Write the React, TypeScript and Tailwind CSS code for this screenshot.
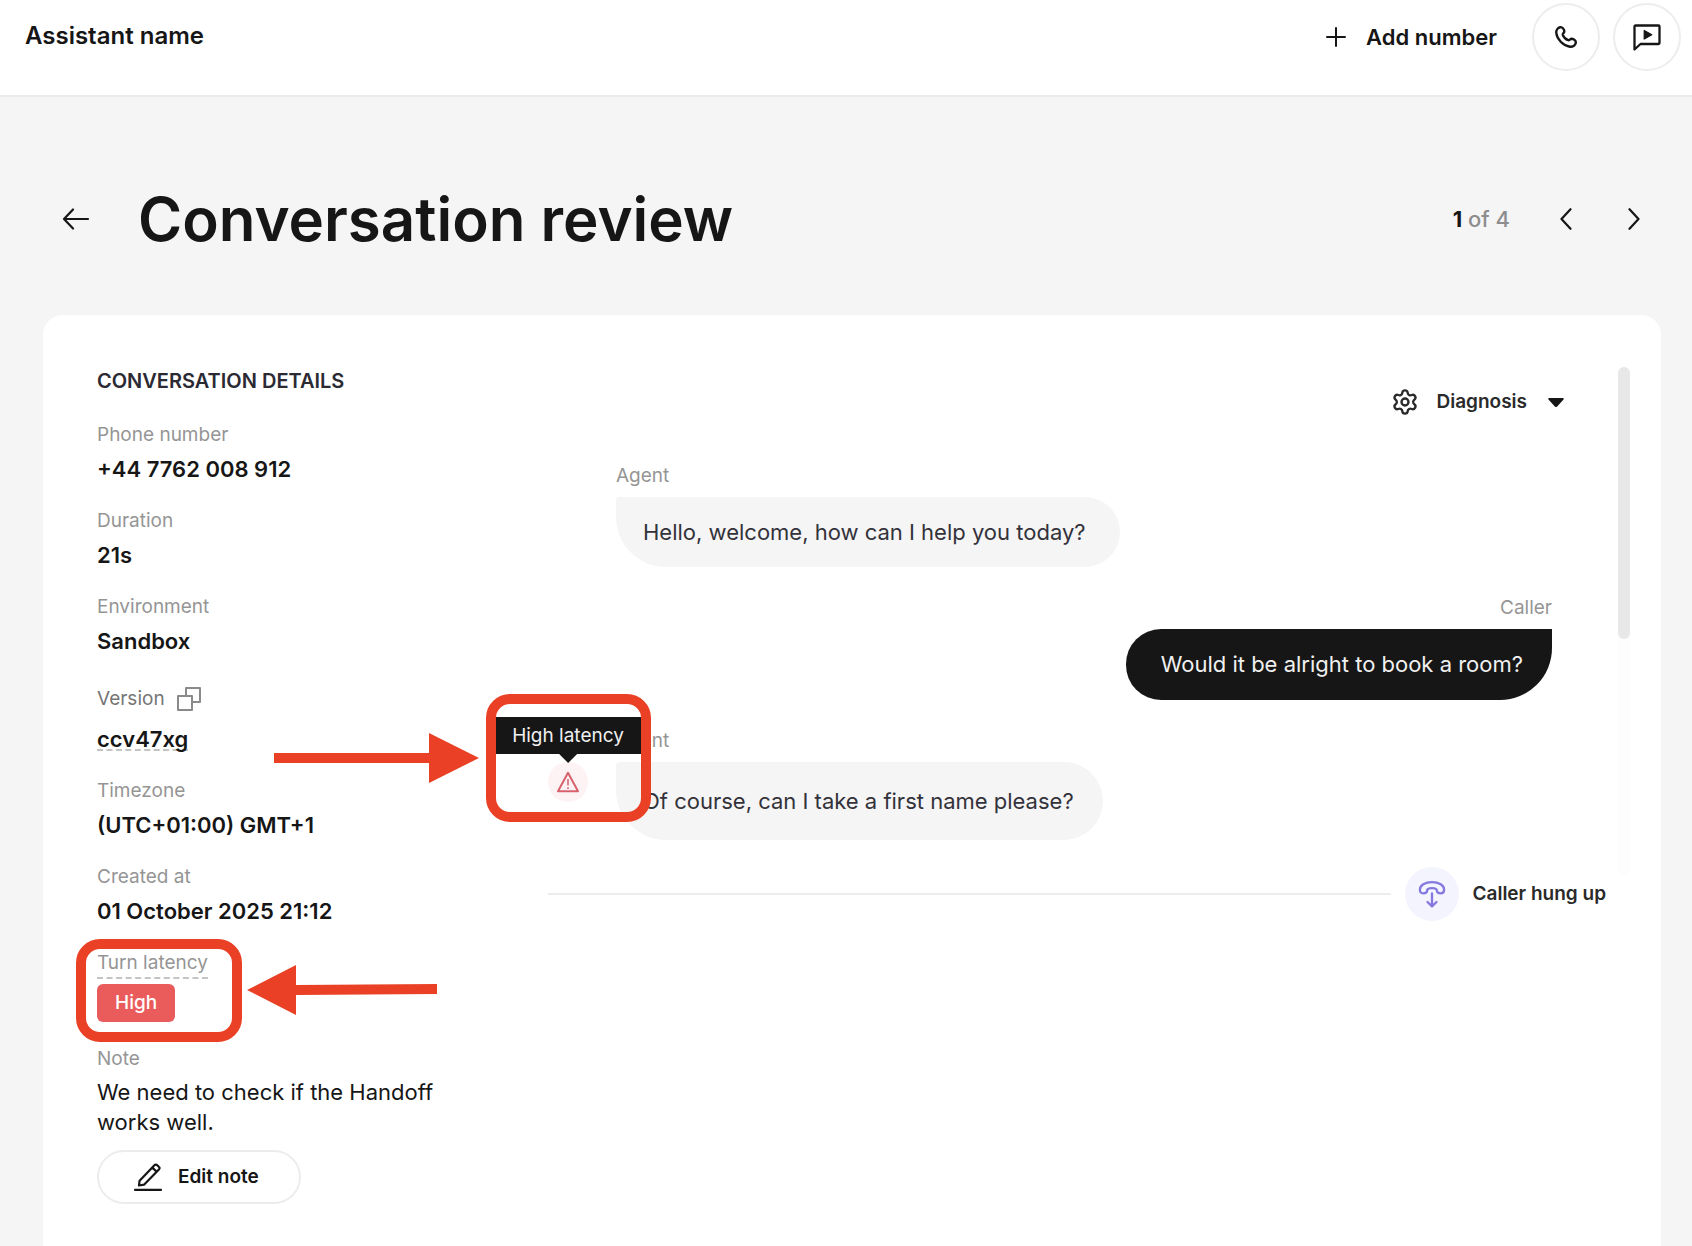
import type { ReactNode } from "react";
import { Settings } from "lucide-react";

function PlusIcon() {
  return (
    <svg viewBox="0 0 20 20" className="size-5" fill="none" stroke="currentColor" strokeWidth="2" strokeLinecap="round" aria-hidden="true">
      <path d="M10 1v18M1 10h18" />
    </svg>
  );
}

function PhoneIcon() {
  return (
    <svg viewBox="0 0 24 24" className="size-6" fill="none" stroke="currentColor" strokeWidth="2.4" strokeLinejoin="round" aria-hidden="true">
      <path d="M6.2 2.2C4 2.6 2 5 2.3 8 3 14.500 9.500 21 16 21.700c3 .3 5.400-1.700 5.800-3.900.5-2-2-3.900-4-4.100-1.800-.1-2.200 1.900-3.600 1.500-2.400-.8-4.600-3-5.400-5.400-.4-1.400 1.600-1.800 1.500-3.600-.2-2-2.100-4.400-4.100-4Z" />
    </svg>
  );
}

function ChatPlayIcon() {
  return (
    <svg viewBox="0 0 28 28" className="size-7" fill="none" stroke="currentColor" strokeWidth="2.3" strokeLinejoin="round" aria-hidden="true">
      <path d="M1.500 26.500V3.500a1 1 0 0 1 1-1h23a1 1 0 0 1 1 1v16.500a1 1 0 0 1-1 1H7.500L1.500 26.500Z" />
      <path d="M11.200 7.500v8.600l7.600-4.300-7.600-4.300Z" fill="currentColor" strokeWidth="1.200" />
    </svg>
  );
}

function BackIcon() {
  return (
    <svg viewBox="0 0 28 22" className="h-[22px] w-7" fill="none" stroke="currentColor" strokeWidth="2.2" strokeLinecap="round" strokeLinejoin="round" aria-hidden="true">
      <path d="M26 11H2M11 1.500 2 11l9 9.500" />
    </svg>
  );
}

function ChevronIcon({ direction }: { direction: "left" | "right" }) {
  return (
    <svg viewBox="0 0 12 22" className="h-[22px] w-3" fill="none" stroke="currentColor" strokeWidth="2.2" strokeLinecap="round" strokeLinejoin="round" aria-hidden="true">
      <path d={direction === "left" ? "M10.500 1.200 1.500 11l9 9.800" : "M1.500 1.200l9 9.800-9 9.800"} />
    </svg>
  );
}

function CopyIcon() {
  return (
    <svg viewBox="0 0 24 24" className="size-6" fill="none" stroke="currentColor" strokeWidth="2" strokeLinejoin="round" aria-hidden="true">
      <path d="M1 9h14v14H1zM9 9V1h14v14h-8" />
    </svg>
  );
}

function EditIcon() {
  return (
    <svg viewBox="0 0 28 28" className="size-7" fill="none" stroke="currentColor" strokeWidth="2.2" strokeLinecap="round" strokeLinejoin="round" aria-hidden="true">
      <path d="M5 22.500l.6-4.800L20.400 2.200a2 2 0 0 1 2.900 0l1.500 1.500a2 2 0 0 1 .1 2.800L10 21.700l-5 .8ZM18.400 4.600l4.200 4.200M1 26.800h26" />
    </svg>
  );
}

function WarningIcon() {
  return (
    <svg viewBox="0 0 24 22" className="h-[22px] w-6" fill="none" stroke="currentColor" strokeWidth="2" strokeLinejoin="round" aria-hidden="true">
      <path d="M12 1.800 22 20.200H2L12 1.800Z" />
      <path d="M12 8v6.500M12 16.200v1.800" strokeWidth="1.500" />
    </svg>
  );
}

function HangUpIcon() {
  return (
    <svg viewBox="0 0 28 28" className="size-7" fill="none" stroke="currentColor" strokeWidth="2.3" strokeLinecap="round" strokeLinejoin="round" aria-hidden="true">
      <path d="M1.900 9.500C1.900 5 7 2.200 14 2.200S26.100 5 26.100 9.500c0 2.600-1.100 3.800-3.200 3.800-2.400 0-4-.7-4-2.500 0-1.700-1.500-2.600-4.900-2.600s-4.900.9-4.900 2.600c0 1.800-1.600 2.500-4 2.500-2.100 0-3.200-1.200-3.200-3.800Z" />
      <path d="M14 13.500V26M9.500 22l4.500 4.300 4.500-4.300" />
    </svg>
  );
}

function Detail({ label, children }: { label: string; children: ReactNode }) {
  return (
    <div>
      <dt className="text-[19px] leading-7 text-[#959595]">{label}</dt>
      <dd className="mt-1 text-[22px] leading-8 font-semibold">{children}</dd>
    </div>
  );
}

function Highlight({ className }: { className: string }) {
  return <div className={`pointer-events-none absolute rounded-[24px] border-[10px] border-[#ea4025] ${className}`} />;
}

function ConversationDetails() {
  return (
    <aside className="w-[451px] shrink-0">
      <h2 className="text-[20px] leading-7 font-semibold text-[#2b2a33]">CONVERSATION DETAILS</h2>
      <dl className="mt-[26px] flex flex-col gap-[22px]">
        <Detail label="Phone number">+44 7762 008 912</Detail>
        <Detail label="Duration">21s</Detail>
        <Detail label="Environment">Sandbox</Detail>
        <div>
          <dt className="flex h-10 items-center gap-3 text-[19px] text-[#757575]">
            Version
            <button type="button" aria-label="Copy version" className="text-[#8a8a8a]">
              <CopyIcon />
            </button>
          </dt>
          <dd className="mt-1 flex h-8">
            <a href="#version" className="h-7 border-b-2 border-dashed border-[#c4c4c4] text-[22px] leading-8 font-semibold">
              ccv47xg
            </a>
          </dd>
        </div>
        <Detail label="Timezone">(UTC+01:00) GMT+1</Detail>
        <Detail label="Created at">01 October 2025 21:12</Detail>
        <div className="relative">
          <dt className="flex">
            <span className="h-[30px] border-b-2 border-dashed border-[#c4c4c4] text-[19px] leading-7 text-[#959595]">Turn latency</span>
          </dt>
          <dd className="mt-1 flex h-10 items-center">
            <span className="rounded-md bg-[#ea5c5c] px-[18px] py-1 text-[19px] leading-[30px] font-medium text-white">High</span>
          </dd>
          <Highlight className="-top-[10px] -left-[21px] h-[103px] w-[166px]" />
          <svg viewBox="0 0 190 50" className="pointer-events-none absolute top-4 left-[150px] h-[50px] w-[190px]" fill="#ea4025" aria-hidden="true">
            <path d="M0 25 49 0v20l141-1v10l-141 1v20Z" />
          </svg>
        </div>
        <div>
          <dt className="text-[19px] leading-7 text-[#959595]">Note</dt>
          <dd className="mt-1 max-w-[360px] text-[22px] leading-[30px]">We need to check if the Handoff works well.</dd>
          <dd className="mt-[13px]">
            <button type="button" className="flex h-[54px] items-center gap-4 rounded-full border-2 border-[#ececec] pr-10 pl-[35px] text-[19px] font-semibold">
              <EditIcon />
              Edit note
            </button>
          </dd>
        </div>
      </dl>
    </aside>
  );
}

function LatencyWarning() {
  return (
    <div className="relative z-10 mt-[35px] flex size-10 shrink-0 items-center justify-center rounded-full bg-[#fef3f4] text-[#d6616b]">
      <WarningIcon />
      <div role="tooltip" className="absolute bottom-12 left-1/2 -translate-x-1/2 rounded bg-[#161616] px-5 text-[19px] leading-[37px] whitespace-nowrap text-[#f0f0f0]">
        High latency
        <svg viewBox="0 0 18 9" className="absolute top-full left-1/2 h-[9px] w-[18px] -translate-x-1/2" fill="#161616" aria-hidden="true">
          <path d="M0 0h18L9 9Z" />
        </svg>
      </div>
      <Highlight className="-top-[68px] -left-[62px] h-32 w-[165px]" />
      <svg viewBox="0 0 205 50" className="pointer-events-none absolute -top-[29px] -left-[274px] h-[50px] w-[205px]" fill="#ea4025" aria-hidden="true">
        <path d="M205 25 155 0v20H0v10h155v20Z" />
      </svg>
    </div>
  );
}

function AgentMessage({ text, bubble, warning }: { text: string; bubble: string; warning?: boolean }) {
  return (
    <div className="flex gap-7">
      {warning ? <LatencyWarning /> : <div className="w-10 shrink-0" />}
      <div>
        <p className="text-[19px] leading-7 text-[#959595]">Agent</p>
        <p className={`mt-[7px] flex items-center bg-[#f5f5f5] pl-[27px] text-[22px] text-[#33323a] ${bubble}`}>{text}</p>
      </div>
    </div>
  );
}

function Conversation() {
  return (
    <section className="flex-1" aria-label="Conversation">
      <div className="mt-[19px] flex justify-end pr-[42px]">
        <button type="button" className="flex h-8 items-center gap-[17px] text-[19px] font-semibold text-[#2a2a2a]">
          <Settings className="size-7" strokeWidth={2} />
          Diagnosis
          <svg viewBox="0 0 16 9" className="ml-1 h-[9px] w-4" fill="#161616" aria-hidden="true">
            <path d="M1.500 0h13c1.200 0 1.600 1 .8 1.800L9.200 8.400a1.600 1.600 0 0 1-2.400 0L.7 1.800C-.1 1 .3 0 1.500 0Z" />
          </svg>
        </button>
      </div>
      <div className="mt-11 flex flex-col gap-[27px]">
        <AgentMessage
          text="Hello, welcome, how can I help you today?"
          bubble="h-[70px] rounded-tl rounded-tr-[35px] rounded-br-[35px] rounded-bl-[50px] pr-[34px]"
        />
        <div className="flex flex-col items-end pr-[54px]">
          <p className="text-[19px] leading-7 text-[#959595]">Caller</p>
          <p className="mt-[7px] flex h-[71px] items-center rounded-l-[35px] rounded-br-[52px] bg-[#161616] pr-[29px] pl-[35px] text-[22px] text-[#f0f0f0]">
            Would it be alright to book a room?
          </p>
        </div>
        <AgentMessage
          warning
          text="Of course, can I take a first name please?"
          bubble="h-[78px] rounded-tl rounded-r-[39px] rounded-bl-[50px] pr-[29px]"
        />
        <div className="flex items-center gap-[14px]">
          <hr className="flex-1 border-t-2 border-[#ededed]" />
          <div className="flex size-[54px] items-center justify-center rounded-full bg-[#f4f4fe] text-[#8478e0]">
            <HangUpIcon />
          </div>
          <p className="text-[19px] font-semibold text-[#2a2a2a]">Caller hung up</p>
        </div>
      </div>
    </section>
  );
}

export default function App() {
  return (
    <div className="flex min-h-screen flex-col bg-[#f5f5f5] font-['Inter',sans-serif] text-[#161616]">
      <header className="flex h-[97px] items-start justify-between border-b-2 border-[#ebebeb] bg-white pt-[3px] pr-[11px] pl-[25px]">
        <p className="text-2xl leading-[66px] font-semibold">Assistant name</p>
        <div className="flex items-center">
          <button type="button" className="flex items-center gap-5 text-[22px] leading-8 font-semibold">
            <PlusIcon />
            Add number
          </button>
          <button type="button" aria-label="Call" className="ml-[35px] flex size-[68px] items-center justify-center rounded-full border-2 border-[#ededed]">
            <PhoneIcon />
          </button>
          <button type="button" aria-label="Open chat preview" className="ml-[13px] flex size-[68px] items-center justify-center rounded-full border-2 border-[#ededed]">
            <ChatPlayIcon />
          </button>
        </div>
      </header>
      <main className="flex flex-1 flex-col pr-[31px] pl-[43px]">
        <div className="flex items-center justify-between pt-[83px] pr-[21px] pb-[57px] pl-[19px]">
          <div className="flex items-center gap-12">
            <a href="#conversations" aria-label="Back">
              <BackIcon />
            </a>
            <h1 className="text-[60px] leading-[78px] font-semibold">Conversation review</h1>
          </div>
          <nav className="flex items-center" aria-label="Conversations">
            <p className="text-[22px] font-medium text-[#8d8d8d]">
              <span className="font-bold text-[#161616]">1</span> of 4
            </p>
            <button type="button" aria-label="Previous conversation" className="ml-[50px]">
              <ChevronIcon direction="left" />
            </button>
            <button type="button" aria-label="Next conversation" className="ml-14">
              <ChevronIcon direction="right" />
            </button>
          </nav>
        </div>
        <div className="flex flex-1 rounded-t-[20px] bg-white pt-[52px] pr-[31px] pl-[54px]">
          <ConversationDetails />
          <Conversation />
          <div className="ml-3 h-[508px] w-3 rounded-full bg-[#fdfdfd]">
            <div className="h-[272px] rounded-full bg-[#e8e8e8]" />
          </div>
        </div>
      </main>
    </div>
  );
}
